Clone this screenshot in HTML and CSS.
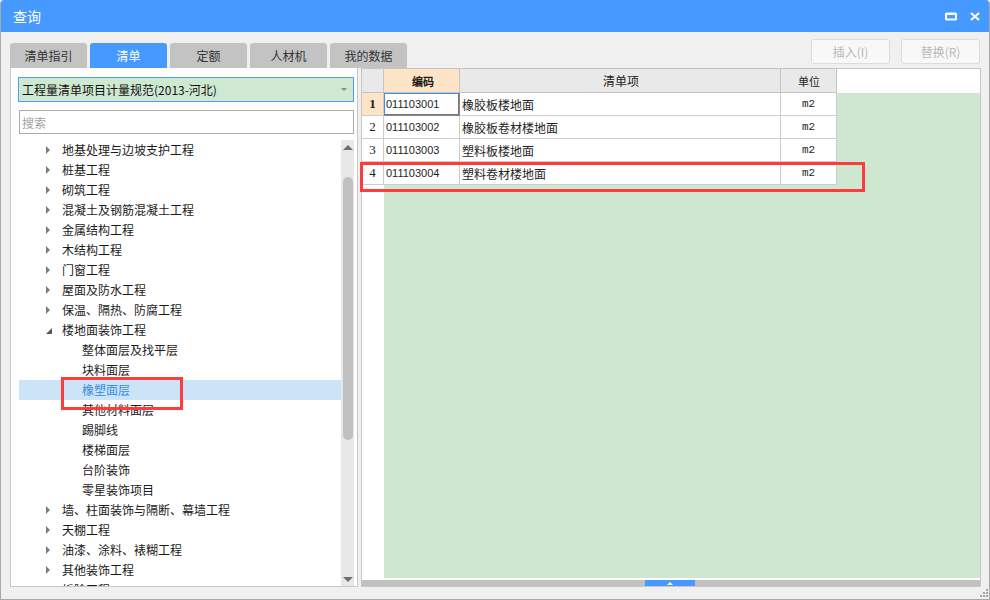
FILE: index.html
```html
<!DOCTYPE html>
<html lang="zh-CN">
<head>
<meta charset="utf-8">
<title>查询</title>
<link rel="stylesheet" href="styles.css">
</head>
<body>
<div class="window">
  <div class="titlebar">
    <span class="title">查询</span>
    <div class="win-btns">
      <svg width="12" height="9" viewBox="0 0 12 9"><path d="M1 1.5 H11 M1 1 V8 M11 1 V8 M1 7.5 H11" stroke="#fff" stroke-width="2" fill="none"/><path d="M1 2.5 H11" stroke="#fff" stroke-width="1"/></svg>
      <svg width="10" height="9" viewBox="0 0 10 9"><path d="M1 1 L9 8 M9 1 L1 8" stroke="#fff" stroke-width="2" fill="none"/></svg>
    </div>
  </div>
  <div class="main">
    <div class="toolbar">
      <div class="tabs">
        <div class="tab">清单指引</div>
        <div class="tab active">清单</div>
        <div class="tab">定额</div>
        <div class="tab">人材机</div>
        <div class="tab">我的数据</div>
      </div>
      <div class="actions">
        <button class="btn" disabled>插入(I)</button>
        <button class="btn" disabled>替换(R)</button>
      </div>
    </div>
    <div class="content">
      <div class="left-panel">
        <div class="combo">
          <span>工程量清单项目计量规范(2013-河北)</span>
          <span class="combo-arrow"></span>
        </div>
        <div class="search">搜索</div>
        <div class="tree-wrap">
          <div class="tree">
            <div class="row"><span class="toggle"><span class="tri-right"></span></span>地基处理与边坡支护工程</div>
            <div class="row"><span class="toggle"><span class="tri-right"></span></span>桩基工程</div>
            <div class="row"><span class="toggle"><span class="tri-right"></span></span>砌筑工程</div>
            <div class="row"><span class="toggle"><span class="tri-right"></span></span>混凝土及钢筋混凝土工程</div>
            <div class="row"><span class="toggle"><span class="tri-right"></span></span>金属结构工程</div>
            <div class="row"><span class="toggle"><span class="tri-right"></span></span>木结构工程</div>
            <div class="row"><span class="toggle"><span class="tri-right"></span></span>门窗工程</div>
            <div class="row"><span class="toggle"><span class="tri-right"></span></span>屋面及防水工程</div>
            <div class="row"><span class="toggle"><span class="tri-right"></span></span>保温、隔热、防腐工程</div>
            <div class="row"><span class="toggle"><svg class="tri-open" width="6" height="6" viewBox="0 0 6 6"><polygon points="6,0 6,6 0,6" fill="#595959"/></svg></span>楼地面装饰工程</div>
            <div class="row child">整体面层及找平层</div>
            <div class="row child">块料面层</div>
            <div class="row child selected">橡塑面层</div>
            <div class="row child">其他材料面层</div>
            <div class="row child">踢脚线</div>
            <div class="row child">楼梯面层</div>
            <div class="row child">台阶装饰</div>
            <div class="row child">零星装饰项目</div>
            <div class="row"><span class="toggle"><span class="tri-right"></span></span>墙、柱面装饰与隔断、幕墙工程</div>
            <div class="row"><span class="toggle"><span class="tri-right"></span></span>天棚工程</div>
            <div class="row"><span class="toggle"><span class="tri-right"></span></span>油漆、涂料、裱糊工程</div>
            <div class="row"><span class="toggle"><span class="tri-right"></span></span>其他装饰工程</div>
            <div class="row"><span class="toggle"><span class="tri-right"></span></span>拆除工程</div>
          </div>
          <div class="vscroll">
            <div class="sb-arrow"><span class="tri-up"></span></div>
            <div class="sb-thumb"></div>
            <div class="sb-space"></div>
            <div class="sb-arrow"><span class="tri-down"></span></div>
          </div>
        </div>
        <div class="mark mark-tree"></div>
      </div>
      <div class="right-panel">
        <div class="grid">
          <div class="grid-head">
            <div class="cell c-num"></div>
            <div class="cell c-code h-active">编码</div>
            <div class="cell c-name">清单项</div>
            <div class="cell c-unit">单位</div>
          </div>
          <div class="grid-body">
            <div class="grid-row">
              <div class="cell c-num n-active">1</div>
              <div class="cell c-code current">011103001</div>
              <div class="cell c-name">橡胶板楼地面</div>
              <div class="cell c-unit">m2</div>
            </div>
            <div class="grid-row">
              <div class="cell c-num">2</div>
              <div class="cell c-code">011103002</div>
              <div class="cell c-name">橡胶板卷材楼地面</div>
              <div class="cell c-unit">m2</div>
            </div>
            <div class="grid-row">
              <div class="cell c-num">3</div>
              <div class="cell c-code">011103003</div>
              <div class="cell c-name">塑料板楼地面</div>
              <div class="cell c-unit">m2</div>
            </div>
            <div class="grid-row">
              <div class="cell c-num">4</div>
              <div class="cell c-code">011103004</div>
              <div class="cell c-name">塑料卷材楼地面</div>
              <div class="cell c-unit">m2</div>
            </div>
          </div>
        </div>
        <div class="hscroll">
          <div class="hs-thumb"><span class="tri-up-white"></span></div>
        </div>
        <div class="mark mark-table"></div>
      </div>
    </div>
  </div>
  <div class="statusbar">
    <svg width="8" height="8" viewBox="0 0 8 8"><g fill="#a3a3a3"><rect x="6" y="0" width="2" height="2"/><rect x="3" y="3" width="2" height="2"/><rect x="6" y="3" width="2" height="2"/><rect x="0" y="6" width="2" height="2"/><rect x="3" y="6" width="2" height="2"/><rect x="6" y="6" width="2" height="2"/></g></svg>
  </div>
</div>
</body>
</html>
```

FILE: styles.css
```css
* { box-sizing: border-box; margin: 0; padding: 0; }
html, body { width: 990px; height: 600px; overflow: hidden; }
body {
  font-family: "Noto Sans CJK SC", "Liberation Sans", sans-serif;
  font-size: 12px;
  color: #1e1e1e;
  background: #fff;
}
.window {
  width: 990px;
  height: 600px;
  display: flex;
  flex-direction: column;
  background: #f0f0f0;
  border: 1px solid #a8a8a8;
  border-top: none;
  border-radius: 4px 4px 0 0;
  overflow: hidden;
}
.titlebar {
  height: 32px;
  flex: none;
  background: #4599ff;
  color: #fff;
  display: flex;
  align-items: center;
  padding: 0 9px 0 12px;
}
.title { font-size: 14px; flex: 1; line-height: 1; }
.win-btns { display: flex; align-items: center; gap: 13px; }
.win-btns svg { display: block; }

.main {
  display: flex;
  flex-direction: column;
  padding: 0 8px 0 9px;
}
.toolbar {
  height: 36px;
  display: flex;
  justify-content: space-between;
}
.tabs {
  display: flex;
  gap: 3px;
  align-self: flex-end;
}
.tab {
  width: 77px;
  height: 25px;
  background: #c3c3c3;
  border-radius: 3px 3px 0 0;
  color: #333;
  display: flex;
  align-items: center;
  justify-content: center;
}
.tab.active { background: #4599ff; color: #fff; }
.actions {
  display: flex;
  gap: 11px;
  padding-top: 7px;
  padding-right: 1px;
}
.btn {
  width: 79px;
  height: 25px;
  border: 1px solid #dcdcdc;
  border-radius: 3px;
  background: #f8f8f8;
  color: #b8b8b8;
  font: inherit;
}

.content {
  height: 519px;
  display: flex;
  gap: 3px;
}
.left-panel {
  position: relative;
  width: 348px;
  background: #fff;
  border: 1px solid #c6c6c6;
  border-top: none;
  padding: 9px 3px 0 8px;
  display: flex;
  flex-direction: column;
}
.combo {
  height: 25px;
  margin: 0 0 0 -1px;
  border: 1px solid #4a9dfa;
  background: #cee8d1;
  display: flex;
  align-items: center;
  justify-content: space-between;
  padding: 0 6px 0 3px;
  color: #111;
}
.combo-arrow {
  width: 0; height: 0;
  border-left: 3px solid transparent;
  border-right: 3px solid transparent;
  border-top: 3px solid #8a8a8a;
}
.search {
  height: 24px;
  margin-top: 8px;
  border: 1px solid #ababab;
  color: #a3a3a3;
  padding: 0 2px;
  display: flex;
  align-items: center;
}
.tree-wrap {
  flex: 1;
  margin-top: 6px;
  display: flex;
  overflow: hidden;
}
.tree { flex: 1; overflow: hidden; }
.row {
  height: 20px;
  display: flex;
  align-items: center;
  padding-left: 27px;
  padding-bottom: 2px;
  white-space: nowrap;
  color: #1a1a1a;
}
.row.child { padding-left: 63px; }
.row.selected { background: #cce4f7; color: #3a8de6; }
.toggle {
  width: 16px;
  height: 18px;
  display: flex;
  align-items: center;
  padding-top: 1px;
}
.tri-right {
  width: 0; height: 0;
  border-top: 4px solid transparent;
  border-bottom: 4px solid transparent;
  border-left: 4px solid #7c7c7c;
}
.tri-open { display: block; margin-top: 2px; }

.vscroll {
  width: 13px;
  background: #e8e8e8;
  display: flex;
  flex-direction: column;
  align-items: center;
}
.sb-arrow {
  height: 14px;
  width: 13px;
  display: flex;
  align-items: center;
  justify-content: center;
}
.tri-up {
  width: 0; height: 0;
  border-left: 5px solid transparent;
  border-right: 5px solid transparent;
  border-bottom: 5px solid #6f6f6f;
}
.tri-down {
  width: 0; height: 0;
  border-left: 5px solid transparent;
  border-right: 5px solid transparent;
  border-top: 5px solid #6f6f6f;
}
.sb-thumb {
  width: 10px;
  height: 263px;
  margin-top: 23px;
  background: #c0c0c0;
  border-radius: 5px;
}
.sb-space { flex: 1; }

.right-panel {
  position: relative;
  width: 620px;
  background: #fff;
  border: 1px solid #c6c6c6;
  display: flex;
  flex-direction: column;
}
.grid { flex: 1; display: flex; flex-direction: column; overflow: hidden; }
.grid-head { display: flex; height: 24px; flex: none; }
.grid-body {
  flex: 1;
  background: linear-gradient(to right, #fff 22px, #cee7d1 22px);
}
.grid-row { display: flex; height: 23px; width: 475px; background: #fff; }
.cell {
  border-right: 1px solid #cdcdcd;
  border-bottom: 1px solid #cdcdcd;
  display: flex;
  align-items: center;
  white-space: nowrap;
  overflow: hidden;
}
.grid-head .cell {
  background: #e9e9e9;
  justify-content: center;
  border-color: #c4c4c4;
}
.grid-head .cell.h-active { background: #fde4c6; font-weight: bold; }
.c-num { width: 22px; justify-content: center; font-family: "Liberation Serif", serif; font-size: 13px; }
.c-num.n-active { background: #fde4c6; font-weight: bold; }
.c-code { width: 76px; padding-left: 2px; font-family: "Liberation Sans", sans-serif; font-size: 11px; }
.c-code.current {
  box-shadow: inset 1px 1px 0 #3d8fe8, inset -1px -1px 0 #777;
  border-right-color: #888;
  border-bottom-color: #888;
}
.c-name { width: 321px; padding-left: 2px; }
.c-unit { width: 56px; justify-content: center; font-family: "Liberation Mono", monospace; font-size: 11px; }

.hscroll {
  flex: none;
  height: 6px;
  margin-top: 2px;
  background: #c1c1c1;
  display: flex;
}
.hs-thumb {
  margin-left: 283px;
  width: 50px;
  height: 6px;
  background: #4599ff;
  display: flex;
  align-items: center;
  justify-content: center;
}
.tri-up-white {
  width: 0; height: 0;
  border-left: 3px solid transparent;
  border-right: 3px solid transparent;
  border-bottom: 3px solid #fff;
}

.mark {
  position: absolute;
  border: 3px solid #ff3c3c;
  pointer-events: none;
}
.mark-tree { left: 50px; top: 309px; width: 122px; height: 33px; }
.mark-table { left: -2px; top: 93px; width: 505px; height: 30px; }

.statusbar {
  flex: 1;
  display: flex;
  justify-content: flex-end;
  align-items: flex-end;
  padding: 0 1px 2px 0;
}
.statusbar svg { display: block; }
```
